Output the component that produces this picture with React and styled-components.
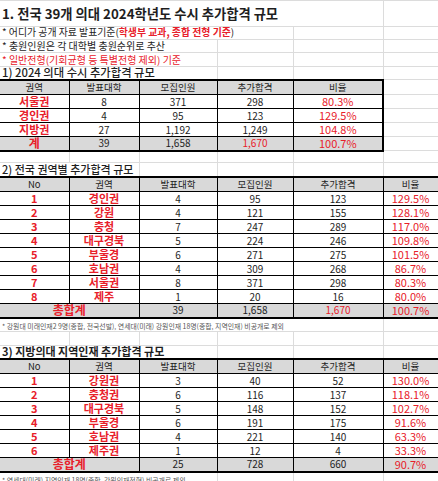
import React from 'react';
import styled, { createGlobalStyle } from 'styled-components';

const RED = '#e8202a';
const GRID = '#dcdcdc';
const INK = '#1e1e1e';
const SHADE = '#d9d9d9';

const GlobalStyle = createGlobalStyle`
  html, body {
    margin: 0;
    padding: 0;
    background: #fff;
  }
  body {
    font-family: "Noto Sans CJK KR", "Noto Sans", sans-serif;
    overflow: hidden;
  }
`;

const Sheet = styled.table`
  border-collapse: collapse;
  table-layout: fixed;
  width: 438px;

  td:first-child {
    border-left: none;
  }
`;

const Row = styled.tr`
  height: ${ p => p.$h || 14 }px;
`;

// plain spreadsheet cell with faint gridlines
const GridCell = styled.td`
  padding: 0;
  border: 1px solid ${ GRID };
  line-height: 1;
  white-space: nowrap;
  overflow: visible;
`;

// text that runs across several cells, like an overflowing excel cell
const TextCell = styled(GridCell)`
  text-align: left;
  padding-left: ${ p => p.$indent || 2 }px;
  font-size: ${ p => p.$size || 10 }px;
  font-weight: ${ p => p.$weight || 400 };
  color: ${ p => p.$color || INK };
`;

const Red = styled.span`
  color: ${ RED };
  font-weight: ${ p => p.$bold ? 700 : 400 };
`;

const TableCell = styled.td`
  padding: 0;
  line-height: 1;
  white-space: nowrap;
  text-align: center;
  vertical-align: middle;
  border: 1px solid #000;
  border-top-width: ${ p => p.$head ? 2 : 1 }px;
  border-bottom-width: ${ p => p.$total ? 2 : 1 }px;
  border-right-width: ${ p => p.$edge ? 2 : 1 }px;
  background: ${ p => (p.$head || p.$total) ? SHADE : '#fff' };
  color: ${ p => p.$red ? RED : INK };
  font-weight: ${ p => p.$bold ? 700 : 400 };
  font-size: ${ p => p.$size || 10 }px;
`;

const Blank = () => <GridCell />;

const blanks = n => Array.from({ length: n }, (_, i) => <Blank key={ `b${ i }` } />);

const EmptyRow = ({ h }) => <Row $h={ h }>{ blanks(6) }</Row>;

const TextRow = ({ h, span, children, ...rest }) => (
  <Row $h={ h }>
    <TextCell colSpan={ span } { ...rest }>{ children }</TextCell>
    { blanks(6 - span) }
  </Row>
);

const summary = [
  ['서울권', '8', '371', '298', '80.3%'],
  ['경인권', '4', '95', '123', '129.5%'],
  ['지방권', '27', '1,192', '1,249', '104.8%'],
];

const regions = [
  ['1', '경인권', '4', '95', '123', '129.5%'],
  ['2', '강원', '4', '121', '155', '128.1%'],
  ['3', '충청', '7', '247', '289', '117.0%'],
  ['4', '대구경북', '5', '224', '246', '109.8%'],
  ['5', '부울경', '6', '271', '275', '101.5%'],
  ['6', '호남권', '4', '309', '268', '86.7%'],
  ['7', '서울권', '8', '371', '298', '80.3%'],
  ['8', '제주', '1', '20', '16', '80.0%'],
];

const local = [
  ['1', '강원권', '3', '40', '52', '130.0%'],
  ['2', '충청권', '6', '116', '137', '118.1%'],
  ['3', '대구경북', '5', '148', '152', '102.7%'],
  ['4', '부울경', '6', '191', '175', '91.6%'],
  ['5', '호남권', '4', '221', '140', '63.3%'],
  ['6', '제주권', '1', '12', '4', '33.3%'],
];

const HeadRow = ({ labels, edge }) => (
  <Row $h={ 15 }>
    { labels.map((l, i) => (
      <TableCell key={ l } $head $size={ 9.5 } $edge={ edge && i === labels.length - 1 }>{ l }</TableCell>
    )) }
    { edge && <Blank /> }
  </Row>
);

const RegionRows = ({ rows }) => rows.map(r => (
  <Row key={ r[0] } $h={ 14 }>
    <TableCell $red $bold $size={ 11 }>{ r[0] }</TableCell>
    <TableCell $red $bold $size={ 11 }>{ r[1] }</TableCell>
    <TableCell>{ r[2] }</TableCell>
    <TableCell>{ r[3] }</TableCell>
    <TableCell>{ r[4] }</TableCell>
    <TableCell $red $size={ 11 }>{ r[5] }</TableCell>
  </Row>
));

const TotalRow = ({ label, values }) => (
  <Row $h={ 14 }>
    <TableCell colSpan={ 2 } $total $red $bold $size={ 12 }>{ label }</TableCell>
    <TableCell $total>{ values[0] }</TableCell>
    <TableCell $total>{ values[1] }</TableCell>
    <TableCell $total $red={ values[3] }>{ values[2] }</TableCell>
    <TableCell $total $red $size={ 11 }>{ values[4] }</TableCell>
  </Row>
);

const NoteText = styled.span`
  font-size: 6.9px;
  color: #555;
`;

const App = () => (
  <>
    <GlobalStyle />
    <Sheet>
      <colgroup>
        <col style={{ width: 69 }} />
        <col style={{ width: 70 }} />
        <col style={{ width: 78 }} />
        <col style={{ width: 76 }} />
        <col style={{ width: 90 }} />
        <col style={{ width: 55 }} />
      </colgroup>
      <tbody>
        <TextRow h={ 26 } span={ 5 } $size={ 13.3 } $weight={ 700 }>
          1. 전국 39개 의대 2024학년도 수시 추가합격 규모
        </TextRow>
        <TextRow h={ 13 } span={ 4 } $size={ 9.9 }>
          * 어디가 공개 자료 발표기준(<Red $bold>학생부 교과, 종합 전형 기준</Red>)
        </TextRow>
        <TextRow h={ 13 } span={ 3 } $size={ 10 }>
          * 충원인원은 각 대학별 충원순위로 추산
        </TextRow>
        <TextRow h={ 14 } span={ 3 } $size={ 10 } $color={ RED }>
          * 일반전형(기회균형 등 특별전형 제외) 기준
        </TextRow>
        <TextRow h={ 13 } span={ 3 } $size={ 11.3 } $weight={ 500 }>
          1) 2024 의대 수시 추가합격 규모
        </TextRow>

        <HeadRow labels={ ['권역', '발표대학', '모집인원', '추가합격', '비율'] } edge />
        { summary.map(r => (
          <Row key={ r[0] } $h={ 14 }>
            <TableCell $red $bold $size={ 11 }>{ r[0] }</TableCell>
            <TableCell>{ r[1] }</TableCell>
            <TableCell>{ r[2] }</TableCell>
            <TableCell>{ r[3] }</TableCell>
            <TableCell $red $size={ 11 } $edge>{ r[4] }</TableCell>
            <Blank />
          </Row>
        )) }
        <Row $h={ 14 }>
          <TableCell $total $red $bold $size={ 12 }>계</TableCell>
          <TableCell $total>39</TableCell>
          <TableCell $total>1,658</TableCell>
          <TableCell $total $red>1,670</TableCell>
          <TableCell $total $red $size={ 11 } $edge>100.7%</TableCell>
          <Blank />
        </Row>

        <EmptyRow h={ 12 } />
        <TextRow h={ 14 } span={ 2 } $size={ 11 } $weight={ 500 }>
          2) 전국 권역별 추가합격 규모
        </TextRow>
        <HeadRow labels={ ['No', '권역', '발표대학', '모집인원', '추가합격', '비율'] } />
        <RegionRows rows={ regions } />
        <TotalRow label="총합계" values={ ['39', '1,658', '1,670', true, '100.7%'] } />
        <TextRow h={ 14 } span={ 5 }>
          <NoteText>* 강원대 미래인재2 9명(종합, 전국선발), 연세대(미래) 강원인재 18명(종합, 지역인재) 비공개로 제외</NoteText>
        </TextRow>
        <EmptyRow h={ 14 } />
        <TextRow h={ 13 } span={ 3 } $size={ 11 } $weight={ 700 }>
          3) 지방의대 지역인재 추가합격 규모
        </TextRow>
        <HeadRow labels={ ['No', '권역', '발표대학', '모집인원', '추가합격', '비율'] } />
        <RegionRows rows={ local } />
        <TotalRow label="총합계" values={ ['25', '728', '660', false, '90.7%'] } />
        <TextRow h={ 14 } span={ 3 }>
          <NoteText>* 연세대(미래) 지역인재 18명(종합, 강원인재전형) 비공개로 제외</NoteText>
        </TextRow>
      </tbody>
    </Sheet>
  </>
);

export default App;
